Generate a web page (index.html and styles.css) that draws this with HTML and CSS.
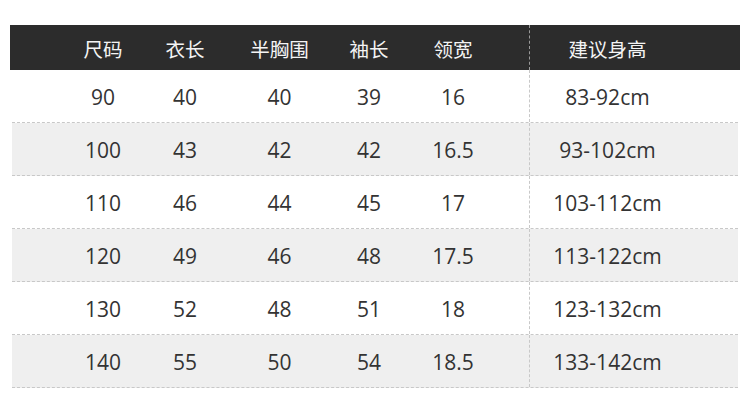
FILE: index.html
```html
<!DOCTYPE html>
<html lang="zh">
<head>
<meta charset="utf-8">
<link rel="stylesheet" href="styles.css">
</head>
<body>
<div class="chart">
  <div class="row head">
    <div class="c">尺码</div><div class="c">衣长</div><div class="c">半胸围</div><div class="c">袖长</div><div class="c c5">领宽</div><div class="c c6">建议身高</div>
  </div>
  <div class="row">
    <div class="c">90</div><div class="c">40</div><div class="c">40</div><div class="c">39</div><div class="c c5">16</div><div class="c c6">83-92cm</div>
  </div>
  <div class="row alt">
    <div class="c">100</div><div class="c">43</div><div class="c">42</div><div class="c">42</div><div class="c c5">16.5</div><div class="c c6">93-102cm</div>
  </div>
  <div class="row">
    <div class="c">110</div><div class="c">46</div><div class="c">44</div><div class="c">45</div><div class="c c5">17</div><div class="c c6">103-112cm</div>
  </div>
  <div class="row alt">
    <div class="c">120</div><div class="c">49</div><div class="c">46</div><div class="c">48</div><div class="c c5">17.5</div><div class="c c6">113-122cm</div>
  </div>
  <div class="row">
    <div class="c">130</div><div class="c">52</div><div class="c">48</div><div class="c">51</div><div class="c c5">18</div><div class="c c6">123-132cm</div>
  </div>
  <div class="row alt">
    <div class="c">140</div><div class="c">55</div><div class="c">50</div><div class="c">54</div><div class="c c5">18.5</div><div class="c c6">133-142cm</div>
  </div>
</div>
</body>
</html>
```

FILE: styles.css
```css
html, body {
  margin: 0;
  padding: 0;
  background: #ffffff;
}
body {
  width: 750px;
  height: 402px;
  overflow: hidden;
  font-family: "Open Sans", "Noto Sans CJK SC", sans-serif;
  color: #333333;
}
.chart {
  margin: 25px 0 0 10px;
  width: 730px;
}
.row {
  display: grid;
  grid-template-columns: 82px 82px 107px 72px 124px 1fr;
  height: 52px;
  margin: 0 2px;
  padding-left: 50px;
  border-bottom: 1px dashed #c8c8c8;
  font-size: 21px;
}
.row.alt {
  background: #efefef;
}
.row.head {
  height: 45px;
  margin: 0;
  padding-left: 52px;
  border-bottom: none;
  background: #2c2c2c;
  color: #f4f4f4;
  font-size: 19.5px;
  font-family: "Noto Sans CJK SC", sans-serif;
}
.c {
  display: flex;
  align-items: center;
  justify-content: center;
  padding-top: 2px;
}
.head .c {
  padding-top: 1px;
}
.c5 {
  padding-right: 28px;
}
.c6 {
  border-left: 1px dashed #c8c8c8;
  padding-right: 53px;
}
.head .c6 {
  border-left-color: #9a9a9a;
  padding-right: 55px;
}
```
